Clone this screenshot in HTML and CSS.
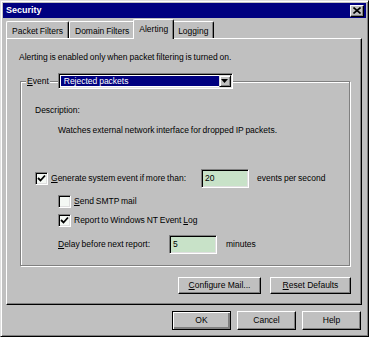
FILE: index.html
```html
<!DOCTYPE HTML>
<html lang="en">
<head>
  <title>Security</title>
  <meta charset="utf-8">
  <link rel="stylesheet" href="styles.css">
</head>
<body>

<div class="window">
  <div class="titlebar">
    <span class="title">Security</span>
    <span class="close">
      <svg width="8" height="7" viewBox="0 0 8 7"><path d="M0.5 0.5 L7.5 6.5 M7.5 0.5 L0.5 6.5" stroke="#000" stroke-width="1.6" fill="none"/></svg>
    </span>
  </div>

  <div class="tabs">
    <span class="tab">Packet Filters</span>
    <span class="tab">Domain Filters</span>
    <span class="tab active">Alerting</span>
    <span class="tab">Logging</span>
  </div>

  <div class="panel">
    <p class="note">Alerting is enabled only when packet filtering is turned on.</p>

    <div class="group">
      <div class="group-head">
        <span class="caption"><u>E</u>vent</span>
        <div class="combo">
          <span class="combo-value">Rejected packets</span>
          <span class="combo-btn">
            <svg width="7" height="4" viewBox="0 0 7 4"><polygon points="0,0 7,0 3.5,4" fill="#000"/></svg>
          </span>
        </div>
      </div>

      <div class="desc-label">Description:</div>
      <div class="desc-text">Watches external network interface for dropped IP packets.</div>

      <div class="row row-threshold">
        <span class="check"><svg width="9" height="9" viewBox="0 0 9 9"><polyline points="1,4 3.5,6.5 8,1.5" stroke="#000" stroke-width="1.8" fill="none"/></svg></span>
        <span class="threshold-label"><u>G</u>enerate system event if more than:</span>
        <span class="field">20</span>
        <span class="unit">events per second</span>
      </div>

      <div class="row sub row-smtp">
        <span class="check"></span>
        <span><u>S</u>end SMTP mail</span>
      </div>

      <div class="row sub row-log">
        <span class="check"><svg width="9" height="9" viewBox="0 0 9 9"><polyline points="1,4 3.5,6.5 8,1.5" stroke="#000" stroke-width="1.8" fill="none"/></svg></span>
        <span>Report to Windows NT Event <u>L</u>og</span>
      </div>

      <div class="row sub row-delay">
        <span class="delay-label"><u>D</u>elay before next report:</span>
        <span class="field">5</span>
        <span class="unit">minutes</span>
      </div>
    </div>

    <div class="panel-actions">
      <button class="btn btn-mail"><u>C</u>onfigure Mail...</button>
      <button class="btn btn-reset"><u>R</u>eset Defaults</button>
    </div>
  </div>

  <div class="dialog-actions">
    <button class="btn btn-dialog default">OK</button>
    <button class="btn btn-dialog">Cancel</button>
    <button class="btn btn-dialog">Help</button>
  </div>
</div>

</body>
</html>
```

FILE: styles.css
```css
html {
  height: 100%;
}
body {
  margin: 0;
  padding: 0;
  background: #c0c0c0;
  color: #000;
  font-family: "Liberation Sans", Arial, sans-serif;
  font-size: 8.5px;
  line-height: 13px;
  word-spacing: -0.5px;
}

u {
  text-decoration: underline;
  text-underline-offset: 1px;
}

.window {
  width: 369px;
  height: 337px;
  box-sizing: border-box;
  background: #c0c0c0;
  border: 1px solid;
  border-color: #dfdfdf #000 #000 #dfdfdf;
  box-shadow: inset 1px 1px #fff, inset -1px -1px #808080;
  padding: 2px;
  display: flex;
  flex-direction: column;
}

.titlebar {
  height: 15px;
  flex: 0 0 auto;
  background: #000080;
  color: #fff;
  font-weight: bold;
  font-size: 9px;
  display: flex;
  align-items: center;
  justify-content: space-between;
  padding: 0 2px 0 3px;
}

.close {
  width: 14px;
  height: 12px;
  box-sizing: border-box;
  background: #c0c0c0;
  border: 1px solid;
  border-color: #fff #000 #000 #fff;
  box-shadow: inset -1px -1px #808080;
  display: flex;
  align-items: center;
  justify-content: center;
}

/* tab strip */
.tabs {
  height: 20px;
  flex: 0 0 auto;
  display: flex;
  align-items: flex-end;
  padding-left: 3px;
}

.tab {
  height: 17px;
  box-sizing: border-box;
  padding: 4px 5px 0;
  border: 1px solid;
  border-color: #fff #000 transparent #fff;
  border-bottom: none;
  border-radius: 2px 2px 0 0;
  box-shadow: inset -1px 0 #808080;
  line-height: 11px;
  white-space: nowrap;
}

.tab.active {
  height: 20px;
  margin: 0 -2px -1px;
  padding: 4px 5px 0;
  position: relative;
  z-index: 1;
  background: #c0c0c0;
}

.panel {
  flex: 0 0 auto;
  height: 267px;
  box-sizing: border-box;
  margin: 0 4px 0 3px;
  border: 1px solid;
  border-color: #fff #000 #000 #fff;
  box-shadow: inset -1px -1px #808080;
  display: flex;
  flex-direction: column;
}

.note {
  margin: 12px 0 0 12px;
}

/* event group box */
.group {
  height: 185px;
  box-sizing: border-box;
  margin: 17px 11px 0 13px;
  padding-left: 14px;
  border: 1px solid #808080;
  box-shadow: 1px 1px #fff, inset 1px 1px #fff;
}

.group-head {
  display: flex;
  align-items: center;
  margin: -9px 0 0 -9px;
}

.caption {
  background: #c0c0c0;
  padding: 0 1px;
  margin-right: 8px;
}

.combo {
  width: 175px;
  height: 16px;
  box-sizing: border-box;
  border: 1px solid;
  border-color: #808080 #fff #fff #808080;
  box-shadow: inset 1px 1px #000, inset -1px -1px #dfdfdf;
  background: #fff;
  padding: 2px;
  display: flex;
}

.combo-value {
  flex: 1;
  background: #000080;
  color: #fff;
  padding-left: 3px;
  line-height: 11px;
}

.combo-btn {
  width: 12px;
  height: 12px;
  margin: -1px -1px 0 0;
  box-sizing: border-box;
  background: #c0c0c0;
  border: 1px solid;
  border-color: #dfdfdf #000 #000 #dfdfdf;
  box-shadow: inset 1px 1px #fff, inset -1px -1px #808080;
  display: flex;
  align-items: center;
  justify-content: center;
}

.desc-label {
  margin-top: 15px;
}

.desc-text {
  margin: 7px 0 0 23px;
}

.row {
  display: flex;
  align-items: center;
  white-space: nowrap;
}

.row.sub {
  margin-left: 23px;
}

.check {
  width: 13px;
  height: 13px;
  flex: 0 0 auto;
  box-sizing: border-box;
  margin-right: 3px;
  background: #f4f8f4;
  border: 1px solid;
  border-color: #808080 #fff #fff #808080;
  box-shadow: inset 1px 1px #000, inset -1px -1px #dfdfdf;
  display: flex;
  align-items: center;
  justify-content: center;
}

.row-threshold {
  margin-top: 32px;
  height: 19px;
}

.threshold-label {
  width: 150px;
}

.row-smtp {
  margin-top: 7px;
  height: 13px;
}

.row-log {
  margin-top: 6px;
  height: 13px;
}

.row-delay {
  margin-top: 8px;
  height: 19px;
}

.delay-label {
  width: 111px;
}

.field {
  width: 48px;
  height: 19px;
  box-sizing: border-box;
  padding: 2px 0 0 3px;
  background: #c8e2c8;
  border: 1px solid;
  border-color: #808080 #fff #fff #808080;
  box-shadow: inset 1px 1px #000, inset -1px -1px #dfdfdf;
}

.unit {
  margin-left: 8px;
}

.row-delay .unit {
  margin-left: 9px;
}

/* buttons */
.btn {
  font: inherit;
  color: #000;
  background: #c0c0c0;
  padding: 0;
  box-sizing: border-box;
  border: 1px solid;
  border-color: #fff #000 #000 #fff;
  box-shadow: inset -1px -1px #808080;
}

.btn.default {
  border-color: #000;
  box-shadow: inset 1px 1px #fff, inset -2px -2px #808080;
}

.panel-actions {
  display: flex;
  justify-content: flex-end;
  gap: 9px;
  margin: 11px 10px 0 0;
}

.btn-mail {
  width: 83px;
  height: 17px;
}

.btn-reset {
  width: 81px;
  height: 17px;
}

.dialog-actions {
  display: flex;
  justify-content: flex-end;
  gap: 6px;
  margin: 6px 5px 0 0;
}

.btn-dialog {
  width: 59px;
  height: 19px;
}
```
